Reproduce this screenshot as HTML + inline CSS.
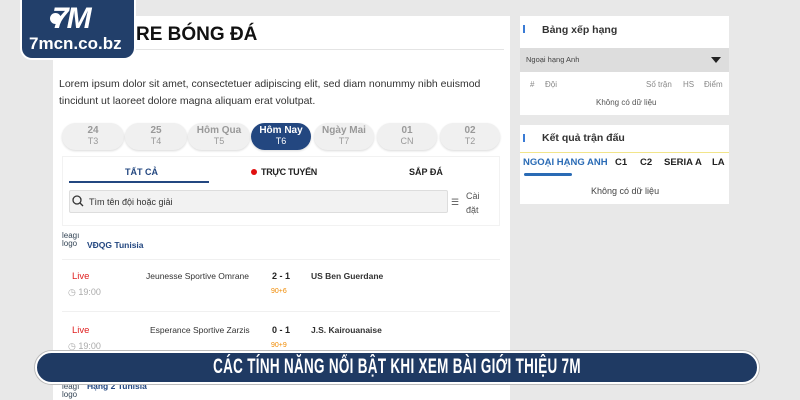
<!DOCTYPE html>
<html><head><meta charset="utf-8"><style>
*{margin:0;padding:0;box-sizing:border-box}
body{width:800px;height:400px;overflow:hidden;background:#e8e8e8;font-family:"Liberation Sans",sans-serif;position:relative;color:#222}
.abs{position:absolute}
.main{left:53px;top:16px;width:457px;height:384px;background:#fff}
.pill{position:absolute;top:123px;width:62px;height:27px;border-radius:14px;background:#f0f0f0;box-shadow:0 1px 2px rgba(0,0,0,.15);text-align:center;font-size:9px;color:#999;line-height:10px;padding-top:3px}
.pill b{font-weight:bold;font-size:10px;display:block}
.act{background:#234780;color:#fff}
.side{background:#fff;left:520px;width:209px}
</style></head><body>
<div class="abs main"></div>
<div class="abs" style="left:136px;top:24px;font-size:19px;font-weight:bold;color:#111">RE BÓNG ĐÁ</div>
<div class="abs" style="left:60px;top:49px;width:444px;height:1px;background:#e4e4e4"></div>
<div class="abs" style="left:59px;top:76px;font-size:10.5px;line-height:16.5px;color:#333;width:440px">Lorem ipsum dolor sit amet, consectetuer adipiscing elit, sed diam nonummy nibh euismod tincidunt ut laoreet dolore magna aliquam erat volutpat.</div>
<div class="pill" style="left:62px"><b>24</b>T3</div>
<div class="pill" style="left:125px"><b>25</b>T4</div>
<div class="pill" style="left:188px"><b>Hôm Qua</b>T5</div>
<div class="pill act" style="left:251px;width:60px"><b>Hôm Nay</b>T6</div>
<div class="pill" style="left:314px;width:60px"><b>Ngày Mai</b>T7</div>
<div class="pill" style="left:377px;width:60px"><b>01</b>CN</div>
<div class="pill" style="left:440px;width:60px"><b>02</b>T2</div>
<div class="abs" style="left:62px;top:156px;width:438px;height:70px;border:1px solid #f2f2f2"></div>
<div class="abs" style="left:125px;top:167px;font-size:9px;color:#234780;font-weight:bold">TẤT CẢ</div>
<div class="abs" style="left:69px;top:181px;width:140px;height:1.5px;background:#234780"></div>
<div class="abs" style="left:251px;top:169px;width:6px;height:6px;border-radius:50%;background:#e01010"></div>
<div class="abs" style="left:261px;top:167px;font-size:9px;font-weight:bold;letter-spacing:-.3px">TRỰC TUYẾN</div>
<div class="abs" style="left:409px;top:167px;font-size:9px;font-weight:bold">SẮP ĐÁ</div>
<div class="abs" style="left:69px;top:190px;width:379px;height:23px;background:#f2f2f2;border:1px solid #ddd;border-radius:2px"></div>
<svg class="abs" style="left:72px;top:195px" width="12" height="12"><circle cx="5" cy="5" r="4" fill="none" stroke="#333" stroke-width="1.3"/><path d="M8 8l3 3" stroke="#333" stroke-width="1.3"/></svg>
<div class="abs" style="left:89px;top:197px;font-size:9px;color:#333">Tìm tên đội hoặc giải</div>
<div class="abs" style="left:451px;top:197px;font-size:9px;color:#555">☰</div>
<div class="abs" style="left:466px;top:189px;font-size:9px;line-height:14px;color:#555">Cài<br>đặt</div>
<div class="abs" style="left:62px;top:232px;font-size:8px;line-height:8px;color:#345">leagı<br>logo</div>
<div class="abs" style="left:87px;top:240px;font-size:8.5px;font-weight:bold;color:#234780">VĐQG Tunisia</div>
<div class="abs" style="left:62px;top:259px;width:438px;height:1px;background:#f0f0f0"></div>
<div class="abs" style="left:72px;top:271px;font-size:9.5px;color:#e02020">Live</div>
<div class="abs" style="left:68px;top:287px;font-size:9px;color:#aaa">◷ 19:00</div>
<div class="abs" style="left:146px;top:271px;font-size:8.5px;color:#333">Jeunesse Sportive Omrane</div>
<div class="abs" style="left:272px;top:271px;font-size:9px;font-weight:bold">2 - 1</div>
<div class="abs" style="left:271px;top:288px;font-size:7px;color:#f08a00">90+6</div>
<div class="abs" style="left:311px;top:271px;font-size:8.5px;font-weight:bold;color:#333">US Ben Guerdane</div>
<div class="abs" style="left:62px;top:311px;width:438px;height:1px;background:#f0f0f0"></div>
<div class="abs" style="left:72px;top:325px;font-size:9.5px;color:#e02020">Live</div>
<div class="abs" style="left:68px;top:341px;font-size:9px;color:#aaa">◷ 19:00</div>
<div class="abs" style="left:150px;top:325px;font-size:8.5px;color:#333">Esperance Sportive Zarzis</div>
<div class="abs" style="left:272px;top:325px;font-size:9px;font-weight:bold">0 - 1</div>
<div class="abs" style="left:271px;top:342px;font-size:7px;color:#f08a00">90+9</div>
<div class="abs" style="left:311px;top:325px;font-size:8.5px;font-weight:bold;color:#333">J.S. Kairouanaise</div>
<div class="abs" style="left:62px;top:383px;font-size:8px;line-height:8px;color:#345">leagı<br>logo</div>
<div class="abs" style="left:87px;top:381px;font-size:8.5px;font-weight:bold;color:#234780">Hạng 2 Tunisia</div>

<div class="abs side" style="top:16px;height:99px"></div>
<div class="abs" style="left:523px;top:25px;width:2px;height:8px;background:#3a7bd5"></div>
<div class="abs" style="left:542px;top:24px;font-size:10.5px;color:#333;font-weight:600">Bảng xếp hạng</div>
<div class="abs" style="left:520px;top:48px;width:209px;height:24px;background:#ddd"></div>
<div class="abs" style="left:526px;top:55px;font-size:7.5px;color:#444">Ngoại hạng Anh</div>
<div class="abs" style="left:711px;top:57px;width:0;height:0;border-left:5px solid transparent;border-right:5px solid transparent;border-top:6px solid #222"></div>
<div class="abs" style="left:530px;top:80px;font-size:8px;color:#888">#</div>
<div class="abs" style="left:545px;top:80px;font-size:8px;color:#888">Đội</div>
<div class="abs" style="left:646px;top:80px;font-size:8px;color:#888">Số trận</div>
<div class="abs" style="left:683px;top:80px;font-size:8px;color:#888">HS</div>
<div class="abs" style="left:704px;top:80px;font-size:8px;color:#888">Điểm</div>
<div class="abs" style="left:596px;top:98px;font-size:8px;color:#555">Không có dữ liệu</div>
<div class="abs side" style="top:125px;height:79px"></div>
<div class="abs" style="left:523px;top:134px;width:2px;height:8px;background:#3a7bd5"></div>
<div class="abs" style="left:542px;top:132px;font-size:10.5px;color:#333;font-weight:600">Kết quả trận đấu</div>
<div class="abs" style="left:520px;top:152px;width:209px;height:1px;background:#f2e58a"></div>
<div class="abs" style="left:523px;top:157px;font-size:9.5px;color:#2a6bb5;font-weight:600">NGOẠI HẠNG ANH</div>
<div class="abs" style="left:615px;top:157px;font-size:9.5px;color:#222;font-weight:600">C1</div>
<div class="abs" style="left:640px;top:157px;font-size:9.5px;color:#222;font-weight:600">C2</div>
<div class="abs" style="left:664px;top:157px;font-size:9.5px;color:#222;font-weight:600">SERIA A</div>
<div class="abs" style="left:712px;top:157px;font-size:9.5px;color:#222;font-weight:600">LA</div>
<div class="abs" style="left:524px;top:173px;width:48px;height:3px;border-radius:2px;background:#2a6bb5"></div>
<div class="abs" style="left:591px;top:186px;font-size:9px;color:#444">Không có dữ liệu</div>

<div class="abs" style="left:20px;top:-4px;width:116px;height:64px;background:#223f6a;border:2px solid #fff;border-top:none;border-radius:0 0 12px 12px"></div>
<div class="abs" style="left:52px;top:2px;font-size:30px;font-weight:bold;font-style:italic;color:#fff;letter-spacing:-2px">7M</div>
<div class="abs" style="left:50px;top:13px;width:11px;height:11px;border-radius:50%;background:#fff"></div>
<div class="abs" style="left:29px;top:34px;font-size:17px;font-weight:bold;color:#fff">7mcn.co.bz</div>

<div class="abs" style="left:35px;top:351px;width:724px;height:33px;background:#1f3a63;border:2px solid #fff;border-radius:17px;box-shadow:0 0 0 1px #bbb"></div>
<div class="abs" style="left:35px;top:355px;width:724px;text-align:center;font-size:21px;font-weight:bold;color:#fff;transform:scaleX(.64);letter-spacing:.5px">CÁC TÍNH NĂNG NỔI BẬT KHI XEM BÀI GIỚI THIỆU 7M</div>
</body></html>
